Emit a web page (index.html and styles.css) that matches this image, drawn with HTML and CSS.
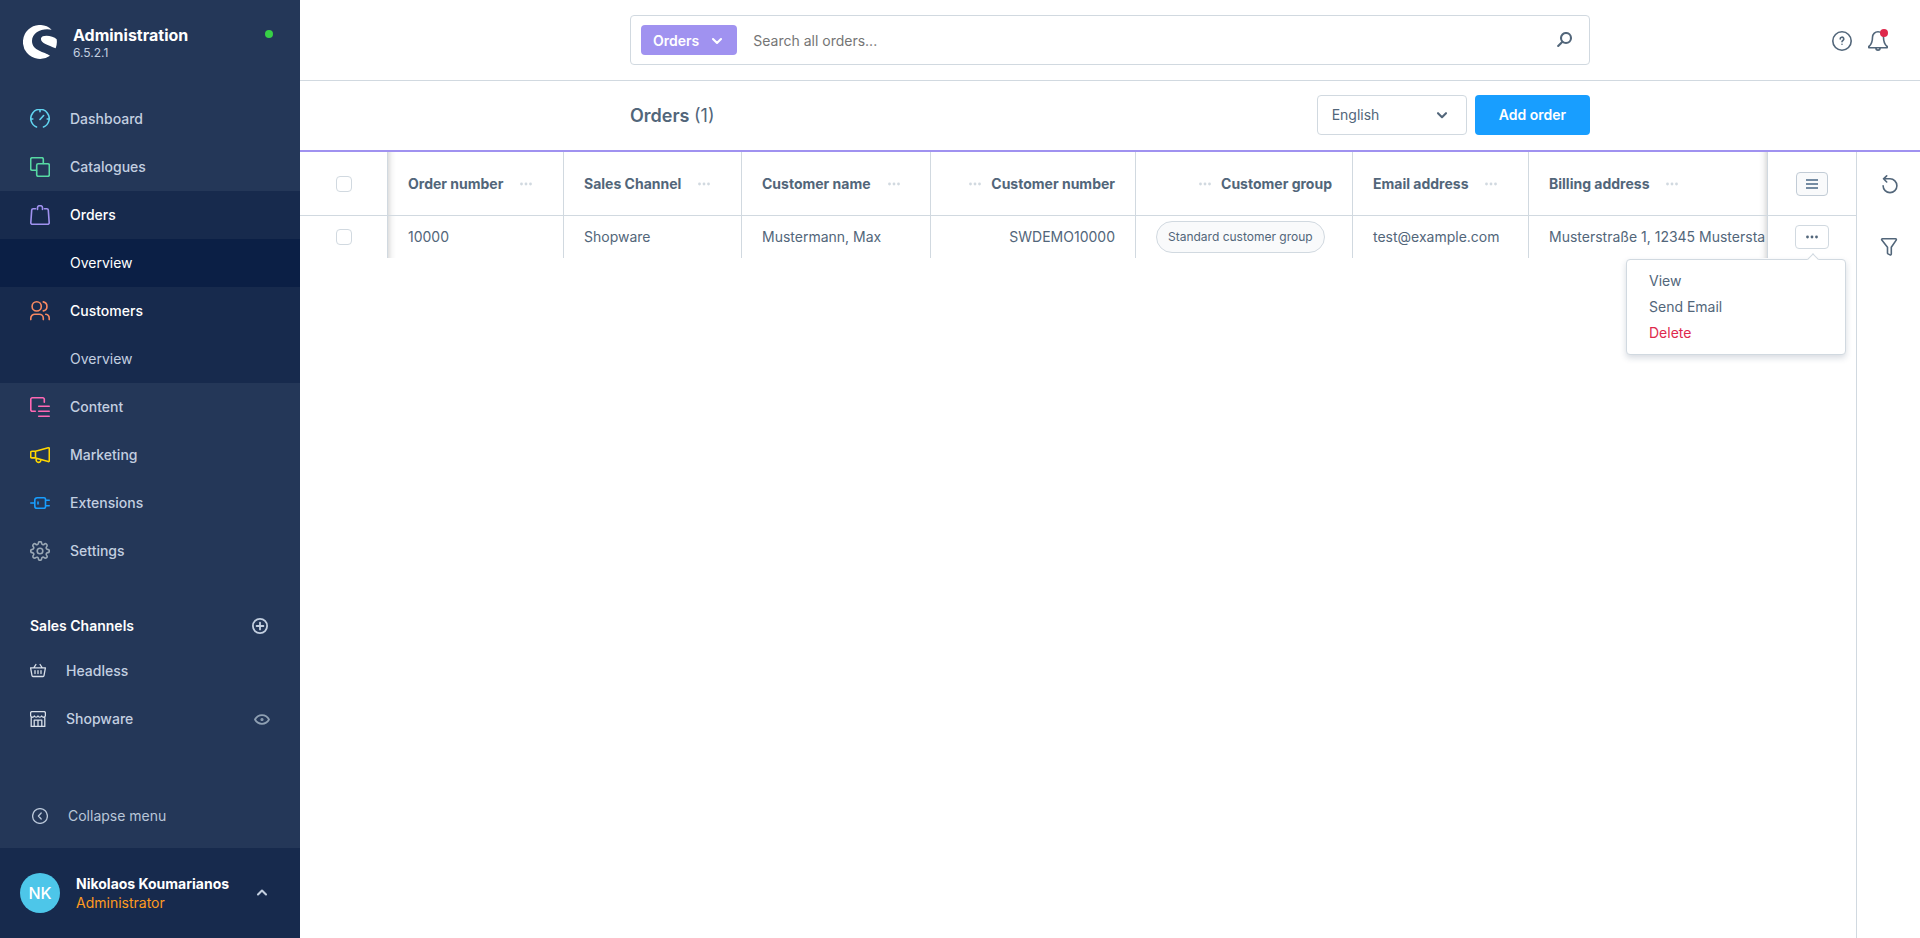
FILE: index.html
```html
<!DOCTYPE html>
<html lang="en">
<head>
<meta charset="utf-8">
<title>Orders | Shopware Administration</title>
<link rel="stylesheet" href="styles.css">
</head>
<body>
<div class="app">
  <aside class="sidebar">
    <header class="brand">
      <svg class="brand-logo" viewBox="0 0 102 102" aria-hidden="true"><path fill="#fff" d="M86 14A51 51 0 1 0 81 92C65 80 27 78 27 48C27 20 60 8 86 14ZM101 43C90 31 56 28 54 40C52 55 74 59 98 70A51 51 0 0 0 101 43Z"/></svg>
      <div class="brand-text">
        <strong class="brand-name">Administration</strong>
        <span class="brand-version">6.5.2.1</span>
      </div>
      <span class="status-dot"></span>
    </header>

    <nav class="main-nav">
      <a class="nav-item" href="#"><svg class="icon-20 c-cyan" viewBox="0 0 20 20"><path d="M6.5 18A9.2 9.2 0 1 1 13.5 18M10 1v1.8M1 10h1.8M17.2 10H19M10 10.5l3.6-4"/></svg>Dashboard</a>
      <a class="nav-item" href="#"><svg class="icon-20 c-green" viewBox="0 0 20 20"><rect x="6.7" y="6.7" width="12.6" height="12.6" rx="1.5"/><path d="M6.5 13.3H2.2A1.5 1.5 0 0 1 .7 11.8V2.2A1.5 1.5 0 0 1 2.2.7h9.6a1.5 1.5 0 0 1 1.5 1.5v4.3"/></svg>Catalogues</a>
      <a class="nav-item open" href="#"><svg class="icon-20 c-purple" viewBox="0 0 20 20"><path d="M5.500 3.700H3.200A1.500 1.500 0 0 0 1.700 5.100L.8 17.700a1.500 1.500 0 0 0 1.500 1.600h15.400a1.500 1.500 0 0 0 1.500-1.600L18.300 5.100a1.500 1.500 0 0 0-1.500-1.400h-2.300M7.500 4.500V2.700a2 2 0 0 1 2-2h1a2 2 0 0 1 2 2v1.800"/></svg>Orders</a>
      <a class="nav-item sub current" href="#">Overview</a>
      <a class="nav-item open" href="#"><svg class="icon-20 c-orange" viewBox="0 0 20 20"><circle cx="6.7" cy="5.4" r="4.6"/><path d="M.8 18.600v-1.400a4 4 0 0 1 4-4h4.500a4 4 0 0 1 4 4v1.400M13.300.9a4.600 4.600 0 0 1 0 9M15.800 13.300a4 4 0 0 1 3.400 4v1.300"/></svg>Customers</a>
      <a class="nav-item sub parent-open" href="#">Overview</a>
      <a class="nav-item" href="#"><svg class="icon-20 c-pink" viewBox="0 0 20 20"><path d="M5.300 14.300H2.300A1.500 1.500 0 0 1 .8 12.800V2.300A1.500 1.500 0 0 1 2.300.8h10.500a1.500 1.500 0 0 1 1.500 1.500v3M8.700 9.200h10.500M8.700 14.200h10.500M8.700 19.200h10.500"/></svg>Content</a>
      <a class="nav-item" href="#"><svg class="icon-20 c-yellow" viewBox="0 0 20 20"><path d="M5.5 6.2 18.200 2.800a.9.9 0 0 1 1.100.9v12a.9.9 0 0 1-1.100.9L5.500 12.900M5.500 6.200v6.700H2a1.300 1.300 0 0 1-1.300-1.300V7.500A1.300 1.300 0 0 1 2 6.200h3.500M6.200 13.300v1.600a2.300 2.300 0 0 0 4.600.3"/></svg>Marketing</a>
      <a class="nav-item" href="#"><svg class="icon-20 c-blue" viewBox="0 0 20 20"><path d="M.8 10h4M7.200 4.700H14a1.500 1.500 0 0 1 1.500 1.500v7.600a1.500 1.500 0 0 1-1.500 1.500H7.200a2.400 2.400 0 0 1-2.400-2.400V7.100a2.400 2.400 0 0 1 2.400-2.400ZM8 9v2M15.500 7.300h3.700M15.500 12.700h3.700"/></svg>Extensions</a>
      <a class="nav-item" href="#"><svg class="icon-20 c-grey" viewBox="0 0 20 20"><circle cx="10" cy="10" r="2.800"/><path d="M8.400 2.200a1.600 1.600 0 0 1 3.200 0c.1 1.300 1.600 1.900 2.600 1.100a1.600 1.600 0 0 1 2.400 2.400c-.9 1-.2 2.500 1.100 2.700a1.600 1.600 0 0 1 0 3.200c-1.300.1-1.900 1.600-1.100 2.600a1.600 1.600 0 0 1-2.400 2.400c-1-.9-2.500-.2-2.600 1.100a1.600 1.600 0 0 1-3.200 0c-.1-1.300-1.600-1.900-2.600-1.100a1.600 1.600 0 0 1-2.400-2.400c.9-1 .2-2.500-1.100-2.600a1.600 1.600 0 0 1 0-3.200c1.300-.1 1.900-1.600 1.100-2.700a1.600 1.600 0 0 1 2.400-2.400c1 .8 2.500.2 2.600-1.100Z"/></svg>Settings</a>
    </nav>

    <section class="channels">
      <div class="channels-head">
        <h2 class="channels-title">Sales Channels</h2>
        <button class="icon-button" type="button" aria-label="Add sales channel"><svg class="icon-16 bold-stroke" viewBox="0 0 16 16"><circle cx="8" cy="8" r="7.1"/><path d="M8 4.600v6.800M4.600 8h6.800"/></svg></button>
      </div>
      <a class="channel" href="#"><svg class="icon-16 c-light" viewBox="0 0 16 16"><path d="M.6 4.900h14.800L14 12.700a1 1 0 0 1-1 .8H3a1 1 0 0 1-1-.8ZM3.900 4.700l2-3.200M12.100 4.700l-2-3.200M5 7.600v3M8 7.600v3M11 7.600v3"/></svg>Headless</a>
      <a class="channel" href="#"><svg class="icon-16 c-light" viewBox="0 0 16 16"><path d="M1.200 6.500v8.900h13.600V6.500M.6 4.500V2A1.400 1.400 0 0 1 2 .6h12A1.400 1.400 0 0 1 15.400 2v2.500a1.900 1.900 0 0 1-3.700.4h-.1a1.900 1.900 0 0 1-3.600 0 1.900 1.900 0 0 1-3.600 0h-.1A1.900 1.900 0 0 1 .6 4.500ZM4.200 15.200V9.200h7.600v6M8 9.200v6"/></svg>Shopware<svg class="icon-16 eye" viewBox="0 0 16 16"><path d="M1 8.500c1.500-2.800 4-4.300 7-4.300s5.500 1.500 7 4.300c-1.500 2.800-4 4.300-7 4.300S2.500 11.300 1 8.500Z"/><circle cx="8" cy="8.500" r=".7"/></svg></a>
    </section>

    <button class="collapse" type="button"><svg class="icon-16" viewBox="0 0 16 16"><circle cx="8" cy="8" r="7.400"/><path d="M9.200 5 6.400 8l2.800 3"/></svg>Collapse menu</button>

    <footer class="user">
      <span class="avatar">NK</span>
      <div class="user-text">
        <strong class="user-name">Nikolaos Koumarianos</strong>
        <span class="user-role">Administrator</span>
      </div>
      <button class="icon-button" type="button" aria-label="User menu"><svg class="icon-12 heavy-stroke" viewBox="0 0 12 12"><path d="M2 7.500 6 3.500l4 4"/></svg></button>
    </footer>
  </aside>

  <div class="content">
    <header class="topbar">
      <form class="search" role="search">
        <button class="search-type" type="button">Orders<svg class="icon-12 heavy-stroke" viewBox="0 0 12 12"><path d="M2 4 6 8l4-4"/></svg></button>
        <input class="search-input" type="text" aria-label="Search" placeholder="Search all orders...">
        <button class="icon-button dark" type="button" aria-label="Submit search"><svg class="icon-16 heavy-stroke" viewBox="0 0 16 16"><circle cx="9" cy="6" r="5"/><path d="M5.400 9.700 1.200 13.900"/></svg></button>
      </form>
      <div class="topbar-actions">
        <button class="icon-button dark" type="button" aria-label="Help"><svg class="icon-20" viewBox="0 0 20 20"><circle cx="10" cy="10" r="9.200"/><path d="M8.200 8a1.800 1.800 0 1 1 2.700 1.500c-.6.400-.9.700-.9 1.300M10 13.200v.1"/></svg></button>
        <button class="icon-button dark bell" type="button" aria-label="Notifications"><svg class="icon-20" viewBox="0 0 20 20"><path d="M4.500 6.300A5.500 5.500 0 0 1 15.500 6.300c0 5 1.500 7.400 3.400 9a.8.8 0 0 1-.5 1.500H1.600a.8.800 0 0 1-.5-1.500C3 13.700 4.500 11.300 4.500 6.300ZM7.900 17a2.100 2.100 0 0 0 4.200 0"/></svg><span class="bell-dot"></span></button>
      </div>
    </header>

    <div class="page-head">
      <div class="page-head-inner">
        <h1 class="page-title">Orders <span class="page-count">(1)</span></h1>
        <div class="select-wrap">
          <select class="language" aria-label="Language"><option>English</option></select>
          <svg class="icon-12 heavy-stroke select-arrow" viewBox="0 0 12 12"><path d="M2 4.200 6 8.200l4-4"/></svg>
        </div>
        <button class="primary" type="button">Add order</button>
      </div>
    </div>

    <main class="grid-area">
      <div class="grid-wrap">
        <table class="grid">
          <colgroup><col class="w-check"><col class="w-order"><col class="w-channel"><col class="w-name"><col class="w-number"><col class="w-group"><col class="w-email"><col><col class="w-check"></colgroup>
          <thead>
            <tr>
              <th class="check-cell"><input class="check" type="checkbox" aria-label="Select all"></th>
              <th class="after-fixed"><div class="head">Order number<svg class="dots" viewBox="0 0 12 4"><circle cx="1.500" cy="2" r="1.400"/><circle cx="6" cy="2" r="1.400"/><circle cx="10.500" cy="2" r="1.400"/></svg></div></th>
              <th><div class="head">Sales Channel<svg class="dots" viewBox="0 0 12 4"><circle cx="1.500" cy="2" r="1.400"/><circle cx="6" cy="2" r="1.400"/><circle cx="10.500" cy="2" r="1.400"/></svg></div></th>
              <th><div class="head">Customer name<svg class="dots" viewBox="0 0 12 4"><circle cx="1.500" cy="2" r="1.400"/><circle cx="6" cy="2" r="1.400"/><circle cx="10.500" cy="2" r="1.400"/></svg></div></th>
              <th><div class="head reverse">Customer number<svg class="dots" viewBox="0 0 12 4"><circle cx="1.500" cy="2" r="1.400"/><circle cx="6" cy="2" r="1.400"/><circle cx="10.500" cy="2" r="1.400"/></svg></div></th>
              <th><div class="head reverse">Customer group<svg class="dots" viewBox="0 0 12 4"><circle cx="1.500" cy="2" r="1.400"/><circle cx="6" cy="2" r="1.400"/><circle cx="10.500" cy="2" r="1.400"/></svg></div></th>
              <th><div class="head">Email address<svg class="dots" viewBox="0 0 12 4"><circle cx="1.500" cy="2" r="1.400"/><circle cx="6" cy="2" r="1.400"/><circle cx="10.500" cy="2" r="1.400"/></svg></div></th>
              <th class="before-fixed"><div class="head">Billing address<svg class="dots" viewBox="0 0 12 4"><circle cx="1.500" cy="2" r="1.400"/><circle cx="6" cy="2" r="1.400"/><circle cx="10.500" cy="2" r="1.400"/></svg></div></th>
              <th class="check-cell"><button class="cell-button settings" type="button" aria-label="Column settings"><svg class="icon-12" viewBox="0 0 12 12"><path d="M0 2h12M0 6h12M0 10h12"/></svg></button></th>
            </tr>
          </thead>
          <tbody>
            <tr>
              <td class="check-cell"><input class="check" type="checkbox" aria-label="Select order 10000"></td>
              <td class="after-fixed">10000</td>
              <td>Shopware</td>
              <td>Mustermann, Max</td>
              <td class="right">SWDEMO10000</td>
              <td><span class="pill">Standard customer group</span></td>
              <td>test@example.com</td>
              <td class="before-fixed">Musterstraße 1, 12345 Mustersta</td>
              <td class="check-cell action-cell">
                <button class="cell-button" type="button" aria-label="Row actions"><svg class="dots dark-dots" viewBox="0 0 12 4"><circle cx="1.500" cy="2" r="1.400"/><circle cx="6" cy="2" r="1.400"/><circle cx="10.500" cy="2" r="1.400"/></svg></button>
                <div class="menu">
                  <button class="menu-item" type="button">View</button>
                  <button class="menu-item" type="button">Send Email</button>
                  <button class="menu-item danger" type="button">Delete</button>
                </div>
              </td>
            </tr>
          </tbody>
        </table>
      </div>
      <aside class="tools">
        <button class="icon-button dark" type="button" aria-label="Refresh"><svg class="icon-20" viewBox="0 0 20 20"><path d="M4.500 4.800H11A6.900 6.900 0 1 1 4.100 11.700M7.700 1.800 4.500 4.800 7.700 8"/></svg></button>
        <button class="icon-button dark" type="button" aria-label="Filter"><svg class="icon-20" viewBox="0 0 20 20"><path d="M3.500 1.700h13a.9.9 0 0 1 .7 1.400l-4.900 7.100v6.900a.9.9 0 0 1-1.300.8l-2-1a.9.9 0 0 1-.5-.8v-5.900L2.800 3.100a.9.9 0 0 1 .7-1.400Z"/></svg></button>
      </aside>
    </main>
  </div>
</div>
</body>
</html>
```
FILE: styles.css
```css
*, *::before, *::after { box-sizing: border-box; }

body {
  margin: 0;
  font-family: Inter, "Liberation Sans", sans-serif;
  font-size: 14px;
  line-height: 20px;
  color: #52667a;
  background: #fff;
}

button, input, select { font: inherit; color: inherit; }
button { cursor: pointer; padding: 0; border: 0; background: none; }
a { color: inherit; text-decoration: none; }

svg {
  flex: none;
  display: block;
  fill: none;
  stroke: currentColor;
  stroke-width: 1.6;
  stroke-linecap: round;
  stroke-linejoin: round;
}
.icon-20 { width: 20px; height: 20px; }
.icon-16 { width: 16px; height: 16px; stroke-width: 1.3; }
.icon-12 { width: 12px; height: 12px; }
.bold-stroke { stroke-width: 1.8; }
.heavy-stroke { stroke-width: 2.1; }
.c-cyan { color: #61d3ef; }
.c-green { color: #57d9a3; }
.c-purple { color: #a092f0; }
.c-orange { color: #f88962; }
.c-pink { color: #ff68b4; }
.c-yellow { color: #ffd700; }
.c-blue { color: #189eff; }
.c-grey { color: #9aa8b5; }
.c-light { color: #d8dfe9; }

.icon-button { display: grid; place-items: center; color: #c3cfe0; }
.icon-button.dark { color: #52667a; }

.app { display: flex; min-height: 100vh; }

/* Sidebar */
.sidebar {
  flex: none;
  display: flex;
  flex-direction: column;
  width: 300px;
  background: #243758;
  color: #c3cfe0;
}
.brand {
  display: flex;
  align-items: flex-start;
  gap: 16px;
  height: 95px;
  padding: 25px 27px 0 23px;
}
.brand-logo { width: 34px; height: 34px; stroke: none; }
.brand-text { flex: 1; display: flex; flex-direction: column; }
.brand-name { font-size: 16px; font-weight: 700; color: #fff; }
.brand-version { font-size: 12px; line-height: 16px; }
.status-dot { width: 8px; height: 8px; margin-top: 5px; border-radius: 50%; background: #37d046; }

.nav-item {
  display: flex;
  align-items: center;
  gap: 20px;
  height: 48px;
  padding: 0 30px;
  font-weight: 500;
}
.nav-item.open { background: #172a4d; color: #fff; }
.nav-item.sub { padding-left: 70px; font-weight: 400; }
.nav-item.parent-open { background: #172a4d; }
.nav-item.current { background: #0b1f45; color: #fff; }

.channels { margin-top: 41px; }
.channels-head {
  display: flex;
  align-items: center;
  justify-content: space-between;
  height: 20px;
  margin-bottom: 11px;
  padding: 0 32px 0 30px;
}
.channels-title { margin: 0; font-size: 14px; font-weight: 600; color: #fff; }
.channel {
  display: flex;
  align-items: center;
  gap: 20px;
  height: 48px;
  padding: 0 30px;
  font-weight: 500;
}
.eye { margin-left: auto; color: #8fa0b3; stroke-width: 1.8; }

.collapse {
  display: flex;
  align-items: center;
  gap: 20px;
  height: 64px;
  margin-top: auto;
  padding: 0 32px;
  color: #b9c6d8;
}
.user {
  display: flex;
  align-items: center;
  gap: 16px;
  height: 90px;
  padding: 0 32px 0 20px;
  background: #172a4d;
}
.avatar {
  display: grid;
  place-items: center;
  width: 40px;
  height: 40px;
  border-radius: 50%;
  background: #4dc6e9;
  color: #fff;
  font-size: 16px;
  font-weight: 500;
}
.user-text { flex: 1; display: flex; flex-direction: column; line-height: 19px; }
.user-name { font-weight: 700; color: #fff; }
.user-role { color: #ff9a1f; }

/* Top bar */
.content { flex: 1; min-width: 0; display: flex; flex-direction: column; }
.topbar {
  display: grid;
  grid-template-columns: 1fr minmax(0, 960px) 1fr;
  align-items: center;
  height: 81px;
  border-bottom: 1px solid #d1d9e0;
}
.search {
  grid-column: 2;
  display: flex;
  align-items: center;
  height: 50px;
  padding: 0 16px 0 10px;
  border: 1px solid #d1d9e0;
  border-radius: 4px;
}
.search-type {
  display: flex;
  align-items: center;
  gap: 12px;
  height: 30px;
  padding: 2px 14px 0 12px;
  border-radius: 4px;
  background: #a092f0;
  color: #fff;
  font-weight: 600;
}
.search-input { flex: 1; min-width: 0; padding: 2px 16px 0; border: 0; outline: 0; background: none; }
.search-input::placeholder { color: #757575; }
.topbar-actions { display: flex; justify-content: flex-end; gap: 16px; padding: 2px 32px 0 0; }
.bell { position: relative; }
.bell-dot {
  position: absolute;
  top: -2px;
  right: 0;
  width: 8px;
  height: 8px;
  border-radius: 50%;
  background: #de294c;
}

/* Page head */
.page-head { height: 71px; padding: 14px 0 0; border-bottom: 2px solid #a092f0; }
.page-head-inner { display: flex; align-items: center; gap: 8px; max-width: 960px; margin: 0 auto; }
.page-title { flex: 1; margin: 0; padding-top: 2px; font-size: 18px; font-weight: 600; }
.page-count { font-weight: 400; }
.select-wrap { position: relative; }
.language {
  appearance: none;
  width: 150px;
  height: 40px;
  padding: 0 14px;
  border: 1px solid #d1d9e0;
  border-radius: 4px;
  background: #fff;
}
.select-arrow { position: absolute; top: 14px; right: 19px; pointer-events: none; }
.primary {
  height: 40px;
  padding: 0 24px;
  border-radius: 4px;
  background: #189eff;
  color: #fff;
  font-weight: 600;
}

/* Data grid */
.grid-area { flex: 1; display: flex; }
.grid-wrap { flex: 1; min-width: 0; }
.grid { width: 100%; table-layout: fixed; border-collapse: separate; border-spacing: 0; }
.w-check { width: 88px; }
.w-order { width: 176px; }
.w-channel { width: 178px; }
.w-name { width: 189px; }
.w-number { width: 205px; }
.w-group { width: 217px; }
.w-email { width: 176px; }
.grid th, .grid td {
  padding: 0 20px;
  border-right: 1px solid #d1d9e0;
  text-align: left;
  white-space: nowrap;
}
.grid th { height: 64px; border-bottom: 1px solid #d1d9e0; font-weight: 700; }
.grid td { height: 42px; }
.grid td.right { text-align: right; }
.grid .before-fixed {
  overflow: hidden;
  padding-right: 0;
  background: linear-gradient(to left, #00000020, #00000008 4px, #0000 8px);
}
.grid .after-fixed { background: linear-gradient(to right, #00000020, #00000008 4px, #0000 8px); }
.grid .check-cell { padding: 0; }
.grid .check-cell:last-child { border-right: 0; }
.head { display: flex; align-items: center; gap: 17px; }
.head.reverse { flex-direction: row-reverse; gap: 10px; }
.dots { width: 12px; height: 4px; stroke: none; fill: #d1d9e0; }
.dark-dots { fill: #52667a; }

.check {
  appearance: none;
  display: block;
  width: 16px;
  height: 16px;
  margin: 0 auto;
  border: 1px solid #d1d9e0;
  border-radius: 4px;
  background: #fff;
}
.pill {
  display: block;
  width: fit-content;
  padding: 0 11px;
  border: 1px solid #d1d9e0;
  border-radius: 16px;
  background: #f9fafb;
  font-size: 12px;
  line-height: 30px;
}
.cell-button {
  display: grid;
  place-items: center;
  width: 34px;
  height: 24px;
  margin: 0 auto;
  border: 1px solid #d1d9e0;
  border-radius: 4px;
  background: #fff;
}
.cell-button.settings { width: 32px; border-color: #c2ccd6; background: #f9fafb; color: #758ca3; }
.settings svg { stroke-width: 2; stroke-linecap: butt; }

/* Row context menu */
.action-cell { position: relative; }
.menu {
  position: absolute;
  top: 43px;
  right: 10px;
  width: 220px;
  padding: 8px 0;
  border: 1px solid #d1d9e0;
  border-radius: 4px;
  background: #fff;
  box-shadow: 0 3px 6px #2437582e;
}
.menu::before {
  content: "";
  position: absolute;
  top: -5px;
  right: 28px;
  width: 8px;
  height: 8px;
  border: 1px solid #d1d9e0;
  border-width: 1px 0 0 1px;
  background: #fff;
  transform: rotate(45deg);
}
.menu-item { display: block; width: 100%; padding: 3px 22px; text-align: left; }
.danger { color: #de294c; }

.tools {
  flex: none;
  display: flex;
  flex-direction: column;
  align-items: center;
  gap: 43px;
  width: 64px;
  padding-top: 22px;
  border-left: 1px solid #d1d9e0;
}
```
